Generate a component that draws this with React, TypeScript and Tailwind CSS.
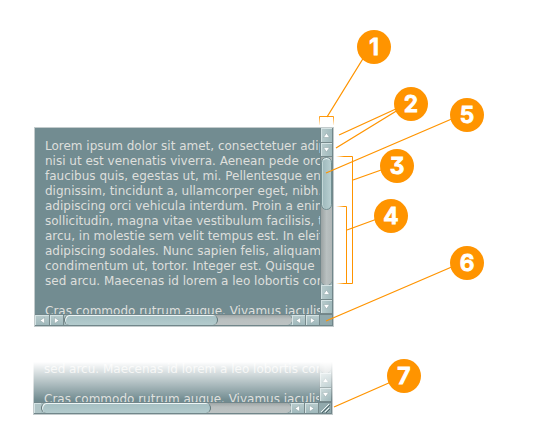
import React from "react";

type Direction = "up" | "down" | "left" | "right";

const arrowShapes: Record<Direction, string> = {
  up: "M3.5 1 L6.5 5.5 H0.5 Z",
  down: "M3.5 6 L6.5 1.5 H0.5 Z",
  left: "M1 3.5 L5.5 0.5 V6.5 Z",
  right: "M6 3.5 L1.5 0.5 V6.5 Z",
};

function ArrowButton({ direction, size }: { direction: Direction; size: string }) {
  const vertical = direction === "up" || direction === "down";
  return (
    <button
      type="button"
      aria-label={`Scroll ${direction}`}
      className={`flex shrink-0 items-center justify-center border-[#76898b] shadow-[inset_1px_1px_0_#d5e3e4] ${
        vertical
          ? "border-b bg-linear-to-r from-[#b9cccd] to-[#a0b9bc]"
          : "border-r bg-linear-to-b from-[#b9cccd] to-[#a0b9bc]"
      } ${size}`}
    >
      <svg width="7" height="7" viewBox="0 0 7 7" aria-hidden="true">
        <path d={arrowShapes[direction]} fill="#fff" stroke="#8aa0a2" strokeWidth="0.5" />
      </svg>
    </button>
  );
}

function VerticalBar() {
  return (
    <div className="flex w-[13px] shrink-0 flex-col justify-end border-x border-[#71868a] bg-[#a9bfc1]">
      <ArrowButton direction="up" size="h-[15px]" />
      <ArrowButton direction="down" size="h-[14px]" />
      <div className="h-32 shrink-0 rounded-b-full bg-linear-to-r from-[#9aa2a2] via-[#b9c0c0] to-[#b0b7b7] shadow-[0_1px_0_#71868a]">
        <div className="h-[53px] rounded-full border border-[#718f92] bg-linear-to-r from-[#9db8bb] to-[#b8cfd1] shadow-[inset_0_2px_0_-1px_#f0f7f7,inset_1px_0_0_#c3d7d8]" />
      </div>
      <ArrowButton direction="up" size="h-[15px]" />
      <ArrowButton direction="down" size="h-[14px]" />
    </div>
  );
}

function HorizontalBar({ resizable }: { resizable: boolean }) {
  return (
    <div className="flex h-3 border-y border-[#71868a] bg-[#a9bfc1]">
      {resizable ? (
        <div className="w-[7px] shrink-0 bg-[#b0c5c7] shadow-[inset_1px_1px_0_#d5e3e4]" />
      ) : (
        <>
          <ArrowButton direction="left" size="w-[15px]" />
          <ArrowButton direction="right" size="w-[14px]" />
        </>
      )}
      <div className="flex grow rounded-full bg-linear-to-b from-[#9fa6a6] via-[#b9bfbf] via-40% to-[#bdc3c3] shadow-[1px_0_0_#71868a]">
        <div
          className={`rounded-full border-x border-[#5f777a] bg-linear-to-b from-[#a5bfc2] to-[#b3cbcd] shadow-[inset_1px_1px_0_#edf5f5] ${
            resizable ? "w-[170px]" : "w-[154px]"
          }`}
        />
      </div>
      <ArrowButton direction="left" size="w-[14px]" />
      <ArrowButton direction="right" size="w-[14px]" />
      <div className="w-[13px] shrink-0 border-r border-[#71868a] bg-[#91a9ac]">
        {resizable && (
          <svg width="12" height="10" viewBox="0 0 12 10" aria-hidden="true">
            <path d="M2 9 L10 1 M6 9 L10 5" stroke="#eef5f5" />
            <path d="M3 10 L11 2 M7 10 L11 6" stroke="#50686c" />
          </svg>
        )}
      </div>
    </div>
  );
}

const lines = [
  "Lorem ipsum dolor sit amet, consectetuer adipiscing",
  "nisi ut est venenatis viverra. Aenean pede orci",
  "faucibus quis, egestas ut, mi. Pellentesque enim",
  "dignissim, tincidunt a, ullamcorper eget, nibh.",
  "adipiscing orci vehicula interdum. Proin a enim",
  "sollicitudin, magna vitae vestibulum facilisis, tellus",
  "arcu, in molestie sem velit tempus est. In eleifend",
  "adipiscing sodales. Nunc sapien felis, aliquam eget",
  "condimentum ut, tortor. Integer est. Quisque",
  "sed arcu. Maecenas id lorem a leo lobortis condim",
];

function ScrollPanel({ faded = false }: { faded?: boolean }) {
  return (
    <div className={`relative w-[300px] ${faded ? "" : "ml-px"}`}>
      <section
        className={`overflow-hidden border border-[#c3cbcc] bg-[#728c91] ${faded ? "border-t-0" : ""}`}
      >
        <div className={`flex items-end overflow-hidden ${faded ? "h-[42px]" : "h-[186px]"}`}>
          <div className="h-[186px] min-w-0 grow overflow-hidden pt-[11px] pl-2.5 font-['DejaVu_Sans',sans-serif] text-[12px] leading-[15px] whitespace-nowrap text-[#dedfdc]">
            {lines.map((line) => (
              <p key={line}>{line}</p>
            ))}
            <p className="mt-[15px]">Cras commodo rutrum augue. Vivamus iaculis</p>
          </div>
          <VerticalBar />
        </div>
        <HorizontalBar resizable={faded} />
      </section>
      {faded && (
        <div className="pointer-events-none absolute inset-x-0 top-0 h-10 bg-linear-to-b from-white from-5% to-transparent" />
      )}
    </div>
  );
}

const callouts = [
  { label: "1", place: "left-[357px] top-[30px]" },
  { label: "2", place: "left-[394px] top-[87px]" },
  { label: "3", place: "left-[380px] top-[149px]" },
  { label: "4", place: "left-[374px] top-[199px]" },
  { label: "5", place: "left-[450px] top-[98px]" },
  { label: "6", place: "left-[450px] top-[246px]" },
  { label: "7", place: "left-[387px] top-[359px]" },
];

function Callouts() {
  return (
    <>
      <svg
        className="pointer-events-none absolute top-0 left-0"
        width="500"
        height="430"
        viewBox="0 0 500 430"
        fill="none"
        stroke="#ff9400"
        aria-hidden="true"
      >
        <defs>
          <linearGradient id="fadeRight" gradientUnits="userSpaceOnUse" x1="336" x2="344" y1="0" y2="0">
            <stop stopColor="#ff9400" stopOpacity="0" />
            <stop offset="1" stopColor="#ff9400" />
          </linearGradient>
          <linearGradient id="fadeDown" gradientUnits="userSpaceOnUse" x1="0" x2="0" y1="116" y2="126">
            <stop stopColor="#ff9400" />
            <stop offset="1" stopColor="#ff9400" stopOpacity="0" />
          </linearGradient>
        </defs>
        <path d="M319.5 125V116.5H333.5V125" stroke="url(#fadeDown)" />
        <path d="M336 156.5H352.5V283.5H336M336 206.5H346.5V283.5" stroke="url(#fadeRight)" />
        <path
          strokeWidth="1.3"
          d="M327 117L364 57M339 135L398 108M336 148L398 110M326 173L454 118M353 180L384 169M347 230L377 219M326 321L454 266M334 407L391 382"
        />
      </svg>
      {callouts.map(({ label, place }) => (
        <span
          key={label}
          className={`absolute flex size-[34px] items-center justify-center rounded-full bg-[#ff9400] font-[Inter,sans-serif] text-[23px] leading-none font-semibold text-white [-webkit-text-stroke:1px_white] [font-feature-settings:'cv09'] ${place}`}
        >
          {label}
        </span>
      ))}
    </>
  );
}

export default function App() {
  return (
    <main className="relative min-h-screen bg-white pt-[127px] pl-[33px]">
      <div className="flex flex-col gap-[33px]">
        <ScrollPanel />
        <ScrollPanel faded />
      </div>
      <Callouts />
    </main>
  );
}
